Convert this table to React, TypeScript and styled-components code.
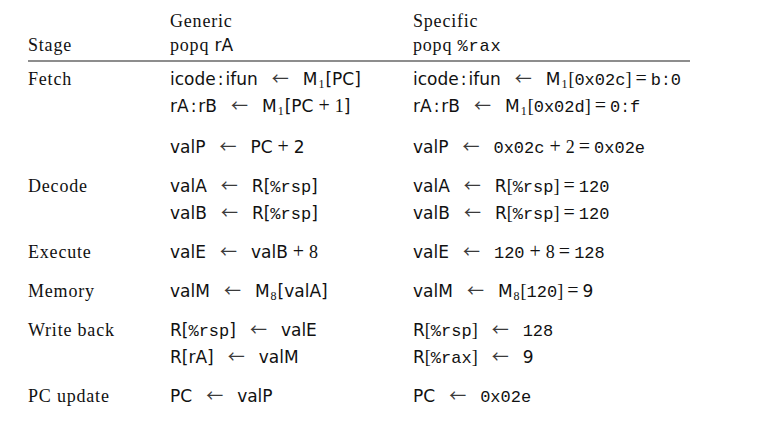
import React from "react";
import styled, { createGlobalStyle } from "styled-components";

const GlobalStyle = createGlobalStyle`
  html, body { margin: 0; padding: 0; background: #ffffff; }
`;

const Page = styled.div`
  padding: 9px 0 0 28px;
  color: #111111;
`;

const Table = styled.div`
  width: 662px;
`;

const Columns = `
  display: grid;
  grid-template-columns: 142px 243px 1fr;
`;

const Header = styled.div`
  ${Columns}
  font-family: "Liberation Serif", serif;
  font-size: 18px;
  letter-spacing: 0.8px;
  line-height: 24px;
  align-items: end;
`;

const HeadCell = styled.div`
  display: flex;
  flex-direction: column;
  white-space: nowrap;
`;

const Rule = styled.div`
  height: 2px;
  background: #8d8d8d;
  margin: 3px 0 4px;
`;

const Body = styled.div`
  display: flex;
  flex-direction: column;
  gap: 12px;
`;

const StageRow = styled.div`
  ${Columns}
  align-items: baseline;
`;

const StageName = styled.div`
  font-family: "Liberation Serif", serif;
  font-size: 18px;
  letter-spacing: 0.8px;
  line-height: 27px;
  white-space: nowrap;
`;

const Ops = styled.div`
  display: flex;
  flex-direction: column;
  font-family: "DejaVu Sans", sans-serif;
  font-size: 17px;
  line-height: 27px;
`;

const Line = styled.div<{ $spaced?: boolean }>`
  white-space: nowrap;
  height: 27px;
  margin-top: ${(p) => (p.$spaced ? "14px" : "0")};
`;

const Sans = styled.span`
  font-family: "DejaVu Sans", sans-serif;
  font-size: 17px;
  letter-spacing: 0;
  line-height: 1;
`;

const Tt = styled.span`
  font-family: "Liberation Mono", monospace;
  font-size: 17px;
  line-height: 1;
`;

const Serif = styled.span`
  font-family: "Liberation Serif", serif;
  font-size: 18px;
  line-height: 1;
`;

const Arrow = styled.span`
  display: inline-block;
  font-family: "Noto Sans CJK SC", sans-serif;
  font-size: 17px;
  line-height: 1;
  color: #3a3a3a;
  margin: 0 14px;
`;

const Sub = styled.span`
  font-family: "Liberation Serif", serif;
  font-size: 12px;
  line-height: 0;
  vertical-align: -3px;
  margin: 0 1px;
`;

const Colon = styled.span`
  margin: 0 2px;
`;

const Op = styled.span<{ $space?: number }>`
  font-family: "Liberation Serif", serif;
  font-size: 20px;
  line-height: 1;
  margin: 0 ${(p) => p.$space ?? 5}px;
`;

const L = () => <Arrow>←</Arrow>;

export default function App() {
  return (
    <>
      <GlobalStyle />
      <Page>
        <Table>
          <Header>
            <HeadCell>Stage</HeadCell>
            <HeadCell>
              <span>Generic</span>
              <span>
                popq <Sans>rA</Sans>
              </span>
            </HeadCell>
            <HeadCell>
              <span>Specific</span>
              <span>
                popq <Tt>%rax</Tt>
              </span>
            </HeadCell>
          </Header>
          <Rule />
          <Body>
            <StageRow>
              <StageName>Fetch</StageName>
              <Ops>
                <Line>
                  icode<Colon>:</Colon>ifun<L />M<Sub>1</Sub>[PC]
                </Line>
                <Line>
                  rA<Colon>:</Colon>rB<L />M<Sub>1</Sub>[PC<Op>+</Op><Serif>1</Serif>]
                </Line>
                <Line $spaced>
                  valP<L />PC<Op>+</Op>2
                </Line>
              </Ops>
              <Ops>
                <Line>
                  icode<Colon>:</Colon>ifun<L />M<Sub>1</Sub>
                  <Serif>[</Serif>
                  <Tt>0x02c</Tt>
                  <Serif>]</Serif>
                  <Op $space={4}>=</Op>
                  <Tt>b</Tt>
                  <Colon>:</Colon>
                  <Tt>0</Tt>
                </Line>
                <Line>
                  rA<Colon>:</Colon>rB<L />M<Sub>1</Sub>
                  <Serif>[</Serif>
                  <Tt>0x02d</Tt>
                  <Serif>]</Serif>
                  <Op $space={4}>=</Op>
                  <Tt>0</Tt>
                  <Colon>:</Colon>
                  <Tt>f</Tt>
                </Line>
                <Line $spaced>
                  valP<L />
                  <Tt>0x02c</Tt>
                  <Op>+</Op>
                  <Serif>2</Serif>
                  <Op $space={4}>=</Op>
                  <Tt>0x02e</Tt>
                </Line>
              </Ops>
            </StageRow>

            <StageRow>
              <StageName>Decode</StageName>
              <Ops>
                <Line>
                  valA<L />R[<Tt>%rsp</Tt>]
                </Line>
                <Line>
                  valB<L />R[<Tt>%rsp</Tt>]
                </Line>
              </Ops>
              <Ops>
                <Line>
                  valA<L />R<Serif>[</Serif>
                  <Tt>%rsp</Tt>
                  <Serif>]</Serif>
                  <Op $space={4}>=</Op>
                  <Tt>120</Tt>
                </Line>
                <Line>
                  valB<L />R<Serif>[</Serif>
                  <Tt>%rsp</Tt>
                  <Serif>]</Serif>
                  <Op $space={4}>=</Op>
                  <Tt>120</Tt>
                </Line>
              </Ops>
            </StageRow>

            <StageRow>
              <StageName>Execute</StageName>
              <Ops>
                <Line>
                  valE<L />valB<Op>+</Op>
                  <Serif>8</Serif>
                </Line>
              </Ops>
              <Ops>
                <Line>
                  valE<L />
                  <Tt>120</Tt>
                  <Op>+</Op>
                  <Serif>8</Serif>
                  <Op $space={4}>=</Op>
                  <Tt>128</Tt>
                </Line>
              </Ops>
            </StageRow>

            <StageRow>
              <StageName>Memory</StageName>
              <Ops>
                <Line>
                  valM<L />M<Sub>8</Sub>[valA]
                </Line>
              </Ops>
              <Ops>
                <Line>
                  valM<L />M<Sub>8</Sub>
                  <Serif>[</Serif>
                  <Tt>120</Tt>
                  <Serif>]</Serif>
                  <Op $space={4}>=</Op>9
                </Line>
              </Ops>
            </StageRow>

            <StageRow>
              <StageName>Write back</StageName>
              <Ops>
                <Line>
                  R[<Tt>%rsp</Tt>]<L />valE
                </Line>
                <Line>
                  R[rA]<L />valM
                </Line>
              </Ops>
              <Ops>
                <Line>
                  R<Serif>[</Serif>
                  <Tt>%rsp</Tt>
                  <Serif>]</Serif>
                  <L />
                  <Tt>128</Tt>
                </Line>
                <Line>
                  R<Serif>[</Serif>
                  <Tt>%rax</Tt>
                  <Serif>]</Serif>
                  <L />9
                </Line>
              </Ops>
            </StageRow>

            <StageRow>
              <StageName>PC update</StageName>
              <Ops>
                <Line>
                  PC<L />valP
                </Line>
              </Ops>
              <Ops>
                <Line>
                  PC<L />
                  <Tt>0x02e</Tt>
                </Line>
              </Ops>
            </StageRow>
          </Body>
        </Table>
      </Page>
    </>
  );
}
